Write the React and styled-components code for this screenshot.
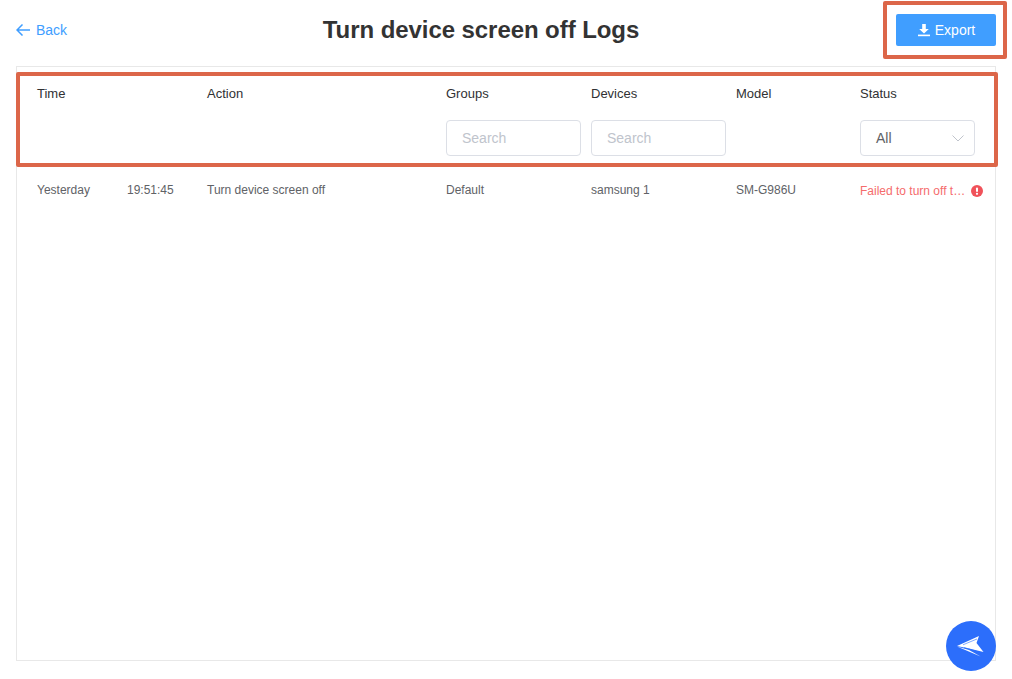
import React from 'react';
import styled, { createGlobalStyle } from 'styled-components';

const GlobalStyle = createGlobalStyle`
  html, body {
    margin: 0;
    padding: 0;
    background: #fff;
    font-family: "Liberation Sans", Arial, sans-serif;
  }
  * {
    box-sizing: border-box;
  }
`;

const COLUMNS = '170px 239px 145px 145px 124px 1fr';

const Page = styled.div`
  position: relative;
  height: 679px;
  padding: 0 16px;
  overflow: hidden;
`;

const Header = styled.header`
  display: flex;
  align-items: center;
  justify-content: space-between;
  height: 66px;
  padding-bottom: 6px;
`;

const BackLink = styled.a`
  display: flex;
  align-items: center;
  gap: 6px;
  width: 50px;
  color: #409eff;
  font-size: 14px;
  white-space: nowrap;
`;

const Title = styled.h1`
  margin: 0;
  color: #333;
  font-size: 24px;
  font-weight: bold;
  letter-spacing: -0.07px;
`;

const ExportButton = styled.button`
  display: flex;
  align-items: center;
  justify-content: center;
  gap: 4px;
  width: 100px;
  height: 32px;
  border: 0;
  border-radius: 2px;
  background: #409eff;
  color: #fff;
  font-family: inherit;
  font-size: 14px;
`;

const Panel = styled.section`
  height: 595px;
  border: 1px solid #e8e8e8;
`;

const HeadRow = styled.div`
  display: grid;
  grid-template-columns: ${COLUMNS};
  height: 99px;
  padding: 18px 0 0 20px;
`;

const HeadCell = styled.div`
  display: flex;
  flex-direction: column;
  gap: 17px;
  color: #303133;
  font-size: 13px;
  line-height: 18px;
`;

const SearchInput = styled.input`
  width: 135px;
  height: 36px;
  padding: 0 15px;
  border: 1px solid #dcdfe6;
  border-radius: 4px;
  font-family: inherit;
  font-size: 14px;
  outline: none;
  &::placeholder {
    color: #c0c4cc;
    opacity: 1;
  }
`;

const SelectBox = styled.div`
  display: flex;
  align-items: center;
  justify-content: space-between;
  width: 115px;
  height: 36px;
  padding: 0 9px 0 15px;
  border: 1px solid #dcdfe6;
  border-radius: 4px;
  color: #606266;
  font-size: 14px;
`;

const BodyRow = styled.div`
  display: grid;
  grid-template-columns: ${COLUMNS};
  align-items: center;
  height: 48px;
  padding-left: 20px;
  color: #606266;
  font-size: 12px;
`;

const TimeCell = styled.div`
  display: grid;
  grid-template-columns: 90px 1fr;
`;

const StatusCell = styled.div`
  display: flex;
  align-items: center;
  gap: 4px;
  padding-top: 2px;
  color: #f56c6c;
`;

const StatusText = styled.span`
  width: 107px;
  white-space: nowrap;
  overflow: hidden;
  text-overflow: ellipsis;
`;

const Callout = styled.div`
  position: absolute;
  border: 4px solid #dc6649;
  border-radius: 2px;
  pointer-events: none;
  left: ${p => p.$left}px;
  top: ${p => p.$top}px;
  width: ${p => p.$width}px;
  height: ${p => p.$height}px;
`;

const FloatButton = styled.button`
  position: absolute;
  right: 16px;
  bottom: 8px;
  display: flex;
  align-items: center;
  justify-content: center;
  width: 50px;
  height: 50px;
  padding: 0 1px 0 0;
  border: 0;
  border-radius: 50%;
  background: #2c6efb;
`;

const BackArrow = () => (
  <svg width="14" height="12" viewBox="0 0 14 12" fill="none" stroke="#409eff" strokeWidth="1.5" style={{ flexShrink: 0 }}>
    <path d="M14 6H1M6.500.5 1 6l5.500 5.500" />
  </svg>
);

const DownloadIcon = () => (
  <svg width="14" height="14" viewBox="0 0 14 14" fill="#fff">
    <path d="M5.200 1h3.600v5h3L7 10.400 2.200 6h3z" />
    <rect x="1" y="11.600" width="12" height="1.600" />
  </svg>
);

const ChevronIcon = () => (
  <svg width="14" height="14" viewBox="0 0 14 14" fill="none" stroke="#c0c4cc" strokeWidth="1">
    <path d="M1.500 4.500 7 10l5.500-5.500" />
  </svg>
);

const AlertIcon = () => (
  <svg width="12" height="12" viewBox="0 0 13 13">
    <circle cx="6.500" cy="6.500" r="6.500" fill="#f0525a" />
    <rect x="5.400" y="2.600" width="2.200" height="5" rx="1.100" fill="#fff" />
    <circle cx="6.500" cy="9.600" r="1.200" fill="#fff" />
  </svg>
);

const PlaneIcon = () => (
  <svg width="27" height="21" viewBox="0 0 27 21">
    <path d="M0 10 22 0 19.500 7 26.500 16 12 12.500Z" fill="#fff" />
    <path d="M0 10.500 23.500 20.500 12 14Z" fill="#fff" />
    <path d="M6 8.800 20 3" fill="none" stroke="#2c6efb" strokeWidth="0.6" />
    <path d="M7 11.500 24 16.600" fill="none" stroke="#2c6efb" strokeWidth="0.6" />
  </svg>
);

export default function App() {
  return (
    <Page>
      <GlobalStyle />
      <Header>
        <BackLink>
          <BackArrow />
          Back
        </BackLink>
        <Title>Turn device screen off Logs</Title>
        <ExportButton>
          <DownloadIcon />
          Export
        </ExportButton>
      </Header>
      <Panel>
        <HeadRow>
          <HeadCell>Time</HeadCell>
          <HeadCell>Action</HeadCell>
          <HeadCell>
            Groups
            <SearchInput placeholder="Search" />
          </HeadCell>
          <HeadCell>
            Devices
            <SearchInput placeholder="Search" />
          </HeadCell>
          <HeadCell>Model</HeadCell>
          <HeadCell>
            Status
            <SelectBox>
              All
              <ChevronIcon />
            </SelectBox>
          </HeadCell>
        </HeadRow>
        <BodyRow>
          <TimeCell>
            <span>Yesterday</span>
            <span>19:51:45</span>
          </TimeCell>
          <div>Turn device screen off</div>
          <div>Default</div>
          <div>samsung 1</div>
          <div>SM-G986U</div>
          <StatusCell>
            <StatusText>Failed to turn off the screen</StatusText>
            <AlertIcon />
          </StatusCell>
        </BodyRow>
      </Panel>
      <FloatButton>
        <PlaneIcon />
      </FloatButton>
      <Callout $left={883} $top={1} $width={124} $height={58} />
      <Callout $left={16} $top={72} $width={982} $height={95} />
    </Page>
  );
}
